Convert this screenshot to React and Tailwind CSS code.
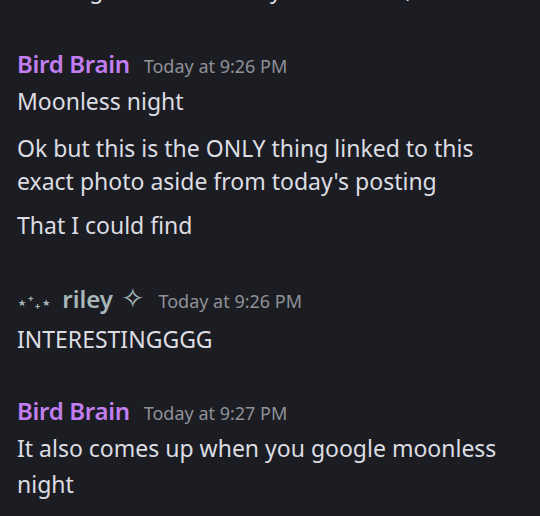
import React from 'react'

const font = { fontFamily: '"Noto Sans", "DejaVu Sans", sans-serif' }

const Header = ({ name, time, riley }) => (
  <div className="flex items-baseline">
    {riley ? (
      <span className="text-[24px] font-semibold text-[#a7b7b9] leading-[32px] flex items-baseline">
        <span className="text-[16px] tracking-[1px] mr-[10px]">⋆⁺₊⋆</span>
        <span>riley</span>
        <span className="text-[28px] ml-[8px] font-normal leading-[30px]">✧</span>
      </span>
    ) : (
      <span className="text-[24px] font-semibold text-[#c27ef0] leading-[32px] tracking-[-0.3px]">{name}</span>
    )}
    <span className="ml-[14px] text-[18px] text-[#8f9199]">{time}</span>
  </div>
)

const Line = ({ children, className = '' }) => (
  <div className={`text-[23px] leading-[33px] text-[#dcdde2] ${className}`}>{children}</div>
)

export default function App() {
  return (
    <div className="w-[540px] h-[516px] overflow-hidden bg-[#1c1d22] pl-[17px]" style={font}>
      <div className="h-[4px] overflow-hidden">
        <div className="-mt-[27px] text-[23px] leading-[33px] text-[#dcdde2] whitespace-nowrap">
          Looking at the other day I saw it too, and
        </div>
      </div>
      <div className="pt-[44px]">
        <Header name="Bird Brain" time="Today at 9:26 PM" />
        <div className="mt-[5px] flex flex-col pr-[40px]">
          <Line>Moonless night</Line>
          <Line className="mt-[14px]">Ok but this is the ONLY thing linked to this exact photo aside from today's posting</Line>
          <Line className="mt-[11px]">That I could find</Line>
        </div>
      </div>
      <div className="pt-[40px]">
        <Header riley time="Today at 9:26 PM" />
        <Line className="mt-[5px]">INTERESTINGGGG</Line>
      </div>
      <div className="pt-[39px]">
        <Header name="Bird Brain" time="Today at 9:27 PM" />
        <div className="mt-[3px] text-[23px] leading-[36px] text-[#dcdde2] pr-[20px]">It also comes up when you google moonless night</div>
      </div>
    </div>
  )
}
